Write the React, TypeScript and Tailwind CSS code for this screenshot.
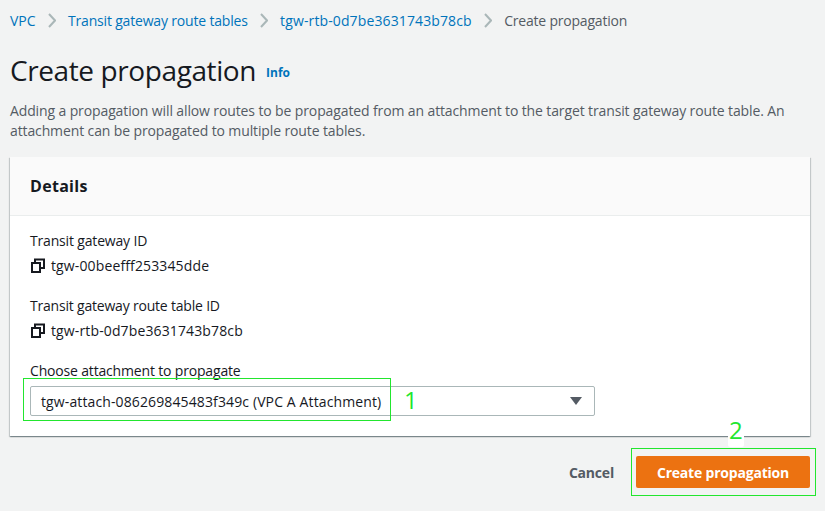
const CopyIcon = () => (
  <svg width="16" height="16" viewBox="0 0 16 16" fill="none" stroke="#16191f" strokeWidth="2" className="shrink-0">
    <rect x="2" y="5" width="8" height="9" />
    <path d="M5 4V1.5h9v8.5h-3" />
  </svg>
);

const Chevron = () => (
  <svg width="8" height="15" viewBox="0 0 8 15" fill="none" stroke="#aab7b8" strokeWidth="2" className="ml-[12px] mr-[12.4px] shrink-0">
    <path d="M1 1l6 6.5L1 14" />
  </svg>
);

const Field = ({ label, value, labelClass }: { label: string; value: string; labelClass: string }) => (
  <div className="h-[65px]">
    <div className={`h-[20px] leading-[20px] text-[#16191f] ${labelClass}`}>{label}</div>
    <div className="mt-[5px] flex items-center gap-[5px] leading-[20px] tracking-[0.13px] text-[#16191f]">
      <CopyIcon />
      <span>{value}</span>
    </div>
  </div>
);

export default function App() {
  return (
    <div className="relative h-[511px] w-[825px] overflow-hidden bg-[#f2f3f3] pl-[10px] pr-[15px] text-[14px] font-['Open_Sans',sans-serif]">
      {/* Breadcrumbs */}
      <div className="flex h-[40px] items-center whitespace-nowrap">
        <span className="text-[#0073bb]">VPC</span>
        <Chevron />
        <span className="tracking-[-0.18px] text-[#0073bb]">Transit gateway route tables</span>
        <Chevron />
        <span className="tracking-[0.12px] text-[#0073bb]">tgw-rtb-0d7be3631743b78cb</span>
        <Chevron />
        <span className="tracking-[-0.2px] text-[#545b64]">Create propagation</span>
      </div>

      {/* Title */}
      <div className="mt-[9px] flex h-[42px] items-center">
        <h1 className="text-[28px] font-normal leading-[42px] tracking-[-0.4px] text-[#16191f]">Create propagation</h1>
        <span className="ml-[10px] mt-[6px] text-[12px] font-bold text-[#0073bb]">Info</span>
      </div>

      <p className="mt-[10px] leading-[20px] tracking-[-0.12px] text-[#545b64]">
        Adding a propagation will allow routes to be propagated from an attachment to the target transit gateway route table. An attachment can be propagated to multiple route tables.
      </p>

      {/* Panel */}
      <div className="mt-[16px] h-[279px] bg-white shadow-[0_1px_1px_0_rgba(0,28,36,0.3),1px_1px_1px_0_rgba(0,28,36,0.15),-1px_1px_1px_0_rgba(0,28,36,0.15)]">
        <div className="flex h-[59px] items-center border-b border-[#eaeded] bg-[#fafafa] px-[20px]">
          <h2 className="text-[16px] font-bold tracking-[0.3px] text-[#16191f]">Details</h2>
        </div>
        <div className="px-[20px] pt-[15px]">
          <Field label="Transit gateway ID" value="tgw-00beefff253345dde" labelClass="tracking-[-0.17px]" />
          <Field label="Transit gateway route table ID" value="tgw-rtb-0d7be3631743b78cb" labelClass="tracking-[-0.2px]" />
          <div className="leading-[20px] tracking-[-0.17px] text-[#16191f]">Choose attachment to propagate</div>
          <div className="mt-[5px] flex h-[30px] w-[565px] items-center justify-between rounded-[2px] border border-[#aab7b8] bg-white pl-[10px] pr-[12px] text-[#16191f]">
            <span className="tracking-[0.12px]">tgw-attach-086269845483f349c (VPC A Attachment)</span>
            <svg width="12" height="8" viewBox="0 0 12 8" fill="#545b64"><path d="M0 0h12L6 8z" /></svg>
          </div>
        </div>
      </div>

      {/* Actions */}
      <div className="mt-[20px] flex items-center justify-end">
        <span className="mr-[22px] font-bold tracking-[-0.2px] text-[#545b64]">Cancel</span>
        <button className="h-[32px] w-[174px] rounded-[2px] bg-[#ec7211] font-bold tracking-[-0.2px] text-white">Create propagation</button>
      </div>

      {/* Annotations */}
      <div className="absolute left-[23px] top-[378px] h-[43px] w-[368px] border border-[#22e62e]" />
      <span className="absolute left-[404px] top-[383px] text-[24px] leading-[34px] text-[#22e62e]">1</span>
      <div className="absolute left-[631px] top-[448px] h-[48px] w-[185px] border border-[#22e62e]" />
      <span className="absolute left-[728px] top-[413px] rounded-[2px] bg-white px-[1px] text-[24px] leading-[34px] text-[#22e62e]">2</span>
    </div>
  );
}
